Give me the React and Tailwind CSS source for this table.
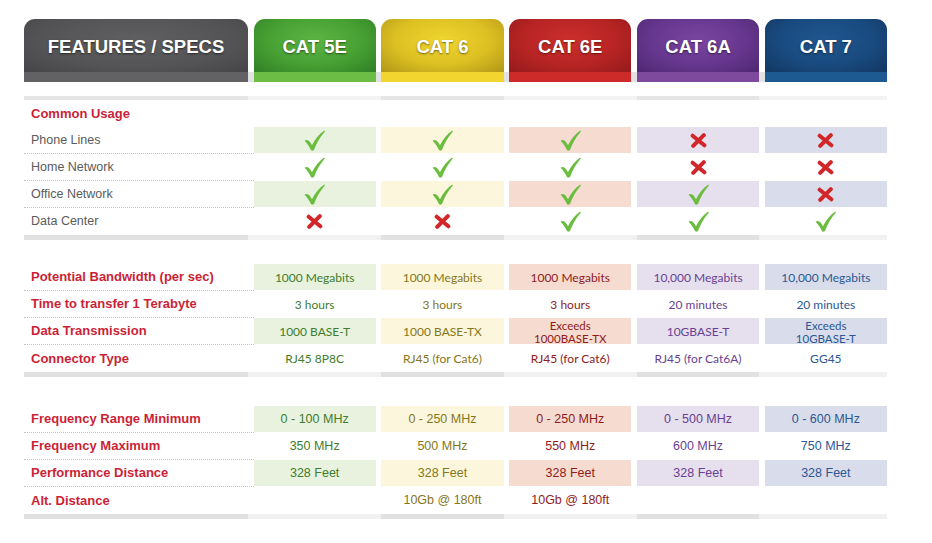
import React from "react";

const cols = [
  {
    name: "CAT 5E",
    head: "bg-[radial-gradient(ellipse_at_50%_40%,#5bb442_0%,#47a033_55%,#2f7f25_100%)]",
    stripe: "bg-[#6cbd45]",
    cell: "bg-[#e8f2df]",
    text: "text-[#3f7c2c]",
  },
  {
    name: "CAT 6",
    head: "bg-[radial-gradient(ellipse_at_50%_40%,#f0d630_0%,#dcbf22_55%,#b09617_100%)]",
    stripe: "bg-[#f3d530]",
    cell: "bg-[#fcf6dc]",
    text: "text-[#86761a]",
  },
  {
    name: "CAT 6E",
    head: "bg-[radial-gradient(ellipse_at_50%_40%,#cc2f2c_0%,#b72424_55%,#941a1c_100%)]",
    stripe: "bg-[#cd2b29]",
    cell: "bg-[#f6dbd1]",
    text: "text-[#8f1c1c]",
  },
  {
    name: "CAT 6A",
    head: "bg-[radial-gradient(ellipse_at_50%_40%,#7a45a0_0%,#66378e_55%,#4e2672_100%)]",
    stripe: "bg-[#7e4a9e]",
    cell: "bg-[#e6dfee]",
    text: "text-[#6a3f92]",
  },
  {
    name: "CAT 7",
    head: "bg-[radial-gradient(ellipse_at_50%_40%,#1f578f_0%,#194a7f_55%,#123761_100%)]",
    stripe: "bg-[#1d5a92]",
    cell: "bg-[#d9dcea]",
    text: "text-[#2b5894]",
  },
];

const grid = "grid grid-cols-[224px_repeat(5,1fr)] gap-x-[5.5px]";

function Check() {
  return (
    <svg width="21" height="21" viewBox="0 0 20 20">
      <path
        d="M0.5 10.2 C2.6 8.6 4.6 9.6 6 12 L7.6 14.6 C10.6 8.4 14.6 3.4 19.4 0.4 L19.9 1.4 C15.6 6 12.2 12 9.7 18.6 C9.1 19.9 7.2 20.1 6.5 18.8 C5 15.6 3 12.6 0.5 10.2 Z"
        fill="#6bbd3f"
      />
    </svg>
  );
}

function Cross() {
  return (
    <svg width="17" height="15" viewBox="0 0 16 14">
      <path
        d="M2.5 2.5 L13.5 11.5 M13 2 L3 12"
        stroke="#d2272a"
        strokeWidth="3.8"
        strokeLinecap="round"
        fill="none"
      />
    </svg>
  );
}

function Bar({ h, dark, light }) {
  const tones = [dark, light, dark, light, dark, light];
  return (
    <div className={`${grid} ${h}`} style={{ backgroundColor: light }}>
      {tones.map((t, i) => (
        <div key={i} style={{ backgroundColor: t }} />
      ))}
    </div>
  );
}

function Row({ label, values, shaded, dotted, labelClass, valueClass, dotColor }) {
  return (
    <div className={`${grid} h-[27px]`}>
      <div
        className={`mr-[-5.5px] flex items-center pl-[7px] ${labelClass} ${
          dotted ? `border-b border-dotted ${dotColor}` : ""
        }`}
      >
        {label}
      </div>
      {values.map((v, i) => (
        <div
          key={i}
          className={`h-[26px] flex items-center justify-center text-center ${
            shaded ? cols[i].cell : ""
          } ${cols[i].text} ${valueClass}`}
        >
          {v === true ? <Check /> : v === false ? <Cross /> : v}
        </div>
      ))}
    </div>
  );
}

const usage = [
  ["Phone Lines", [true, true, true, false, false]],
  ["Home Network", [true, true, true, false, false]],
  ["Office Network", [true, true, true, true, false]],
  ["Data Center", [false, false, true, true, true]],
];

const ml = (a, b) => (
  <span className="text-[11.5px] leading-[13px]">
    {a}
    <br />
    {b}
  </span>
);

const speed = [
  ["Potential Bandwidth (per sec)", ["1000 Megabits", "1000 Megabits", "1000 Megabits", "10,000 Megabits", "10,000 Megabits"]],
  ["Time to transfer 1 Terabyte", ["3 hours", "3 hours", "3 hours", "20 minutes", "20 minutes"]],
  ["Data Transmission", ["1000 BASE-T", "1000 BASE-TX", ml("Exceeds", "1000BASE-TX"), "10GBASE-T", ml("Exceeds", "10GBASE-T")]],
  ["Connector Type", ["RJ45 8P8C", "RJ45 (for Cat6)", "RJ45 (for Cat6)", "RJ45 (for Cat6A)", "GG45"]],
];

const freq = [
  ["Frequency Range Minimum", ["0 - 100 MHz", "0 - 250 MHz", "0 - 250 MHz", "0 - 500 MHz", "0 - 600 MHz"]],
  ["Frequency Maximum", ["350 MHz", "500 MHz", "550 MHz", "600 MHz", "750 MHz"]],
  ["Performance Distance", ["328 Feet", "328 Feet", "328 Feet", "328 Feet", "328 Feet"]],
  ["Alt. Distance", ["", "10Gb @ 180ft", "10Gb @ 180ft", "", ""]],
];

export default function App() {
  return (
    <div className="w-[932px] h-[543px] bg-white overflow-hidden font-['Liberation_Sans',Arial,sans-serif]">
      <div className="ml-[24px] w-[863px] pt-[19px]">
        {/* Header tabs */}
        <div className={`${grid} bg-[linear-gradient(to_bottom,transparent_53px,#e2e2e2_53px)]`}>
          <div className="rounded-t-[11px] overflow-hidden flex flex-col">
            <div className="h-[53px] pt-[2px] flex items-center justify-center bg-[radial-gradient(ellipse_at_50%_40%,#5f5f61_0%,#545456_60%,#454547_100%)] text-white font-bold text-[18.5px] [text-shadow:0_1px_2px_rgba(0,0,0,0.55)]">
              FEATURES / SPECS
            </div>
            <div className="h-[10px] bg-[#626264]" />
          </div>
          {cols.map((c) => (
            <div key={c.name} className="rounded-t-[11px] overflow-hidden flex flex-col">
              <div
                className={`h-[53px] pt-[2px] flex items-center justify-center ${c.head} text-white font-bold text-[18.5px] [text-shadow:0_1px_2px_rgba(0,0,0,0.5)]`}
              >
                {c.name}
              </div>
              <div className={`h-[10px] ${c.stripe}`} />
            </div>
          ))}
        </div>

        {/* Common usage */}
        <div className="mt-[14px]">
          <Bar h="h-[4px]" dark="#e5e5e5" light="#f3f3f3" />
          <div className="h-[27px] flex items-center pl-[7px] text-[13px] font-bold text-[#cc1f36]">
            Common Usage
          </div>
          {usage.map(([label, vals], r) => (
            <Row
              key={label}
              label={label}
              values={vals}
              shaded={r % 2 === 0}
              dotted={r < 3}
              dotColor="border-[#b9c6d4]"
              labelClass="text-[12.5px] text-[#5b5b5b]"
              valueClass=""
            />
          ))}
          <Bar h="h-[5px]" dark="#e1e1e1" light="#f1f1f1" />
        </div>

        {/* Bandwidth */}
        <div className="mt-[24px]">
          {speed.map(([label, vals], r) => (
            <Row
              key={label}
              label={label}
              values={vals}
              shaded={r % 2 === 0}
              dotted={r < 3}
              dotColor="border-[#c4c4c4]"
              labelClass="text-[13px] font-bold text-[#cc1f36]"
              valueClass="font-['Lato',sans-serif] text-[12px] pt-[1px]"
            />
          ))}
          <Bar h="h-[5px]" dark="#e1e1e1" light="#f1f1f1" />
        </div>

        {/* Frequency */}
        <div className="mt-[29px]">
          {freq.map(([label, vals], r) => (
            <Row
              key={label}
              label={label}
              values={vals}
              shaded={r % 2 === 0}
              dotted={r < 3}
              dotColor="border-[#c4c4c4]"
              labelClass="text-[13px] font-bold text-[#cc1f36]"
              valueClass="text-[12.5px]"
            />
          ))}
          <Bar h="h-[5px]" dark="#e1e1e1" light="#f1f1f1" />
        </div>
      </div>
    </div>
  );
}
